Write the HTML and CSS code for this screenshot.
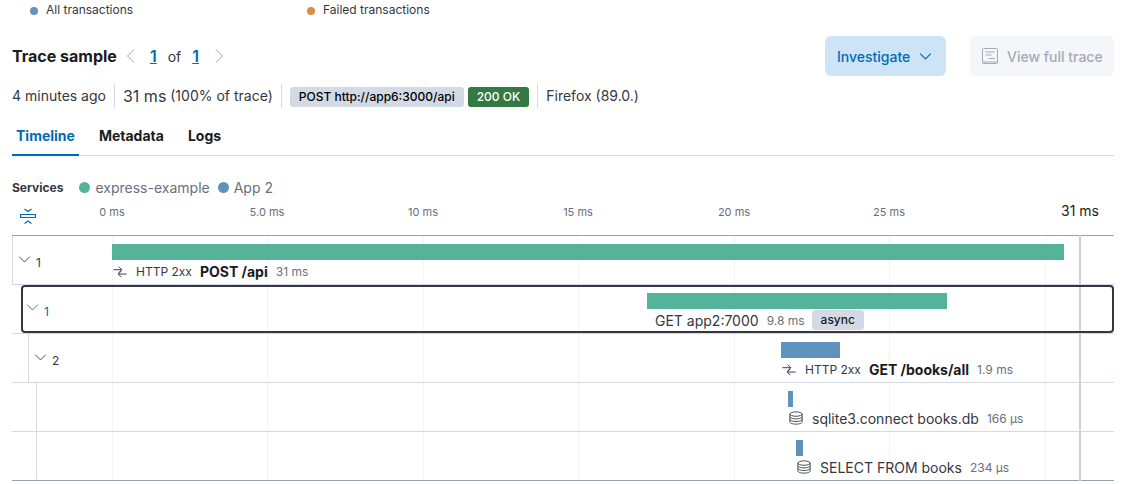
FILE: index.html
```html
<!DOCTYPE html>
<html lang="en">
<head>
<meta charset="utf-8">
<title>Trace sample</title>
<link rel="stylesheet" href="styles.css">
</head>
<body>
<div class="page">
  <div class="chart-legend">
    <span class="legend-item legend-all"><i class="legend-dot dot-blue"></i>All transactions</span>
    <span class="legend-item"><i class="legend-dot dot-orange"></i>Failed transactions</span>
  </div>

  <header class="trace-header">
    <h2 class="trace-title">Trace sample</h2>
    <svg class="pager-arrow" viewBox="0 0 16 16"><path d="M11 1.500 4.500 8l6.500 6.500"/></svg>
    <a class="pager-link pager-first">1</a>
    <span class="pager-of">of</span>
    <a class="pager-link">1</a>
    <svg class="pager-arrow pager-next" viewBox="0 0 16 16"><path d="M5 1.500 11.500 8 5 14.500"/></svg>
    <div class="header-actions">
      <button class="btn btn-primary">Investigate
        <svg class="btn-chevron" viewBox="0 0 16 16"><path d="M1.500 4.500 8 11l6.500-6.500"/></svg>
      </button>
      <button class="btn btn-disabled">
        <svg class="btn-doc" viewBox="0 0 16 16"><rect x=".5" y=".5" width="15" height="15" rx="1"/><path d="M3.500 4h9M3.500 7h6M6.500 10.500h6.500M1 14h14"/></svg>
        View full trace
      </button>
    </div>
  </header>

  <div class="summary">
    <span class="summary-cell">4 minutes ago</span>
    <span class="summary-cell"><span class="summary-num">31 ms</span> (100% of trace)</span>
    <span class="summary-cell summary-badges">
      <span class="badge badge-url">POST http://app6:3000/api</span>
      <span class="badge badge-ok">200 OK</span>
    </span>
    <span class="summary-cell summary-last">Firefox (89.0.)</span>
  </div>

  <nav class="tabs">
    <a class="tab tab-active">Timeline</a>
    <a class="tab">Metadata</a>
    <a class="tab">Logs</a>
  </nav>

  <div class="services">
    <strong class="services-label">Services</strong>
    <span class="service"><i class="service-dot dot-green"></i>express-example</span>
    <span class="service"><i class="service-dot dot-blue"></i>App 2</span>
  </div>

  <div class="axis">
    <svg class="collapse-icon" viewBox="0 0 16 16"><path d="M4.500 1 8 3.500 11.500 1M.500 6.500h15v3H.500zM4.500 15.500 8 13l3.500 2.500"/></svg>
    <span class="tick" style="left:112px">0 ms</span>
    <span class="tick" style="left:267px">5.0 ms</span>
    <span class="tick" style="left:423px">10 ms</span>
    <span class="tick" style="left:578px">15 ms</span>
    <span class="tick" style="left:734px">20 ms</span>
    <span class="tick" style="left:889px">25 ms</span>
    <span class="tick-total">31 ms</span>
  </div>

  <div class="waterfall">
    <div class="gridlines">
      <i style="left:100px"></i><i style="left:255px"></i><i style="left:411px"></i><i style="left:566px"></i><i style="left:722px"></i><i style="left:877px"></i><i style="left:1033px"></i>
    </div>
    <i class="end-marker"></i>

    <div class="row row-l0">
      <div class="toggle"><svg viewBox="0 0 16 16"><path d="M1.500 4.500 8 11l6.500-6.500"/></svg><span>1</span></div>
      <div class="track" style="padding-left:99px">
        <div class="bar bar-green" style="width:952px"></div>
        <div class="label">
          <svg class="ico-http" viewBox="0 0 16 16"><path d="M.5 6.500H10M6.500 3l3.500 3.500L6.500 10M15.500 11.500H6M9.500 8 6 11.500 9.500 15"/></svg>
          <span class="label-kind">HTTP 2xx</span><b class="label-name">POST /api</b><span class="label-dur">31 ms</span>
        </div>
      </div>
    </div>

    <div class="row row-l1">
      <div class="row-box">
        <div class="toggle toggle-blue"><svg viewBox="0 0 16 16"><path d="M1.500 4.500 8 11l6.500-6.500"/></svg><span>1</span></div>
        <div class="track" style="padding-left:624px">
          <div class="bar bar-green" style="width:300px"></div>
          <div class="label label-span">
            <span class="label-text">GET app2:7000</span><span class="label-dur">9.8 ms</span><span class="async">async</span>
          </div>
        </div>
      </div>
    </div>

    <div class="row row-l2">
      <div class="toggle"><svg viewBox="0 0 16 16"><path d="M1.500 4.500 8 11l6.500-6.500"/></svg><span>2</span></div>
      <div class="track" style="padding-left:769px">
        <div class="bar bar-blue" style="width:59px"></div>
        <div class="label">
          <svg class="ico-http" viewBox="0 0 16 16"><path d="M.5 6.500H10M6.500 3l3.500 3.500L6.500 10M15.500 11.500H6M9.500 8 6 11.500 9.500 15"/></svg>
          <span class="label-kind">HTTP 2xx</span><b class="label-name">GET /books/all</b><span class="label-dur">1.9 ms</span>
        </div>
      </div>
    </div>

    <div class="row row-l3">
      <div class="track" style="padding-left:776px">
        <div class="bar bar-blue" style="width:5px"></div>
        <div class="label">
          <svg class="ico-db" viewBox="0 0 16 16"><ellipse cx="8" cy="3.500" rx="7" ry="2.500"/><path d="M1 3.500v9C1 13.900 4.100 15 8 15s7-1.100 7-2.500v-9M1 6.500C1 7.900 4.100 9 8 9s7-1.100 7-2.500M1 9.500C1 10.900 4.100 12 8 12s7-1.100 7-2.500"/></svg>
          <span class="label-text">sqlite3.connect books.db</span><span class="label-dur">166 μs</span>
        </div>
      </div>
    </div>

    <div class="row row-l3 row-last">
      <div class="track" style="padding-left:784px">
        <div class="bar bar-blue" style="width:7px"></div>
        <div class="label">
          <svg class="ico-db" viewBox="0 0 16 16"><ellipse cx="8" cy="3.500" rx="7" ry="2.500"/><path d="M1 3.500v9C1 13.900 4.100 15 8 15s7-1.100 7-2.500v-9M1 6.500C1 7.900 4.100 9 8 9s7-1.100 7-2.500M1 9.500C1 10.900 4.100 12 8 12s7-1.100 7-2.500"/></svg>
          <span class="label-text">SELECT FROM books</span><span class="label-dur">234 μs</span>
        </div>
      </div>
    </div>
  </div>
</div>
</body>
</html>
```

FILE: styles.css
```css
* { box-sizing: border-box; }
html, body { margin: 0; height: 484px; overflow: hidden; background: #fff; }
body { font-family: Inter, "Liberation Sans", sans-serif; color: #343741; font-size: 14px; }
i { display: block; }
svg { display: block; flex: none; fill: none; stroke: currentColor; stroke-width: 1; }

.page { width: 1130px; padding: 0 16px 0 12px; }

.chart-legend { display: flex; height: 20px; padding-left: 18px; font-size: 12px; line-height: 20px; color: #343741; }
.legend-item { display: flex; align-items: center; }
.legend-all { width: 277px; }
.legend-dot { width: 8px; height: 8px; border-radius: 50%; margin-right: 8px; margin-top: 1px; }
.dot-blue { background: #6092c0; }
.dot-orange { background: #da8b45; }
.dot-green { background: #54b399; }

.trace-header { display: flex; align-items: center; height: 40px; margin-top: 16px; }
.trace-title { margin: 0 6px 0 0; font-size: 16px; line-height: 24px; font-weight: 650; color: #1a1c21; }
.pager-arrow { width: 16px; height: 16px; color: #98a2b3; }
.pager-link { margin-left: 11px; color: #006bb4; font-weight: 600; font-size: 16px; text-decoration: underline; }
.pager-of { margin-left: 11px; color: #343741; }
.pager-next { margin-left: 12px; }
.header-actions { display: flex; gap: 24px; margin-left: auto; }
.btn { display: flex; align-items: center; height: 40px; border: 0; border-radius: 6px; padding: 0 12px; white-space: nowrap; font: 500 14px Inter, "Liberation Sans", sans-serif; }
.btn-primary { width: 121px; background: #cce4f5; color: #006bb4; }
.btn-chevron { width: 13px; height: 13px; margin-left: 9px; stroke-width: 1.4; }
.btn-disabled { width: 144px; background: #f4f6f9; color: #a2abba; }
.btn-doc { width: 16px; height: 16px; margin-right: 9px; }

.summary { display: flex; align-items: center; height: 24px; margin-top: 8px; line-height: 24px; }
.summary-cell { display: flex; align-items: center; height: 24px; padding-right: 8px; margin-right: 8px; border-right: 1px solid #d3dae6; white-space: pre; }
.summary-num { font-size: 16px; }
.summary-badges { gap: 4px; padding-right: 8px; }
.summary-last { border-right: 0; }
.badge { display: block; height: 20px; margin-top: 1px; line-height: 20px; padding: 0 9px; border-radius: 3px; font-size: 12px; font-weight: 500; }
.badge-url { background: #d3dae6; color: #000; }
.badge-ok { background: #327a42; color: #fff; }

.tabs { display: flex; height: 36px; margin-top: 12px; border-bottom: 1px solid #d3dae6; }
.tab { height: 36px; padding: 0 4px; margin-right: 16px; font-size: 14px; font-weight: 680; line-height: 32px; color: #1a1c21; }
.tab-active { color: #006bb4; border-bottom: 2px solid #006bb4; }

.services { display: flex; align-items: center; height: 20px; margin-top: 21px; margin-bottom: 1px; font-size: 14px; color: #69707d; }
.services-label { font-size: 12px; font-weight: 650; color: #343741; margin-right: 16px; }
.service { display: flex; align-items: center; margin-right: 8px; }
.service-dot { width: 11px; height: 11px; border-radius: 50%; margin-right: 5px; }

.axis { position: relative; height: 37px; margin-left: -12px; margin-right: -16px; font-size: 11px; color: #69707d; }
.collapse-icon { position: absolute; left: 20px; top: 10px; width: 16px; height: 16px; color: #006bb4; stroke-width: 1.2; }
.tick { position: absolute; top: 7px; transform: translateX(-50%); line-height: 14px; white-space: nowrap; }
.tick-total { position: absolute; left: 1061px; top: 4px; font-size: 14px; line-height: 17px; color: #1a1c21; }

.waterfall { position: relative; height: 246px; border-top: 1px solid #98a2b3; }
.gridlines { position: absolute; inset: 0; }
.gridlines i { position: absolute; top: 0; bottom: 0; width: 1px; background: #f1f3f7; }
.end-marker { position: absolute; left: 1067px; top: -1px; bottom: 0; width: 2px; background: #ccd1dc; z-index: 1; }

.row { position: relative; display: flex; height: 49px; border-bottom: 1px solid #d3dae6; }
.row-l0 { border-left: 1px solid #d3dae6; }
.row-l1 { padding-left: 9px; }
.row-box { position: relative; display: flex; flex: 1; height: 48px; border: 2px solid #343741; border-radius: 4px; z-index: 2; }
.row-l2::before { content: ""; position: absolute; left: 16px; top: 0; bottom: 0; width: 1px; background: #d3dae6; }
.row-l3::before { content: ""; position: absolute; left: 24px; top: 0; bottom: 0; width: 1px; background: #d3dae6; }
.row-last { border-bottom-color: #98a2b3; }

.toggle { position: absolute; display: flex; align-items: flex-start; top: 17px; left: 5px; font-size: 12px; line-height: 14px; color: #343741; z-index: 1; }
.toggle svg { width: 13px; height: 13px; margin-right: 5px; stroke-width: 1.1; }
.toggle span { margin-top: 3px; }
.toggle-blue { color: #006bb4; left: 3px; top: 14px; }
.toggle-blue span { margin-top: 4px; }
.row-l2 .toggle { left: 22px; top: 17px; }

.track { position: relative; flex: 1; padding-top: 8px; }
.row-l1 .track { padding-top: 6px; }
.bar { height: 16px; }
.bar-green { background: #54b399; }
.bar-blue { background: #6092c0; }
.label { display: flex; align-items: center; height: 20px; margin-top: 1px; white-space: nowrap; }
.label-span { padding-left: 8px; }
.ico-http { width: 14px; height: 14px; margin-right: 9px; margin-left: 1px; color: #343741; stroke-width: 1.1; }
.ico-db { width: 14px; height: 14px; margin-right: 9px; margin-left: 1px; color: #343741; }
.label-kind { font-size: 12px; color: #343741; margin-right: 8px; }
.label-name { font-size: 14px; font-weight: 650; color: #1a1c21; margin-right: 8px; }
.label-text { font-size: 14px; color: #343741; margin-right: 8px; }
.label-dur { font-size: 12px; color: #69707d; }
.async { display: block; height: 20px; line-height: 20px; margin-left: 7px; padding: 0 9px; border-radius: 3px; background: #d3dae6; color: #1a1c21; font-size: 12px; font-weight: 500; }
```
